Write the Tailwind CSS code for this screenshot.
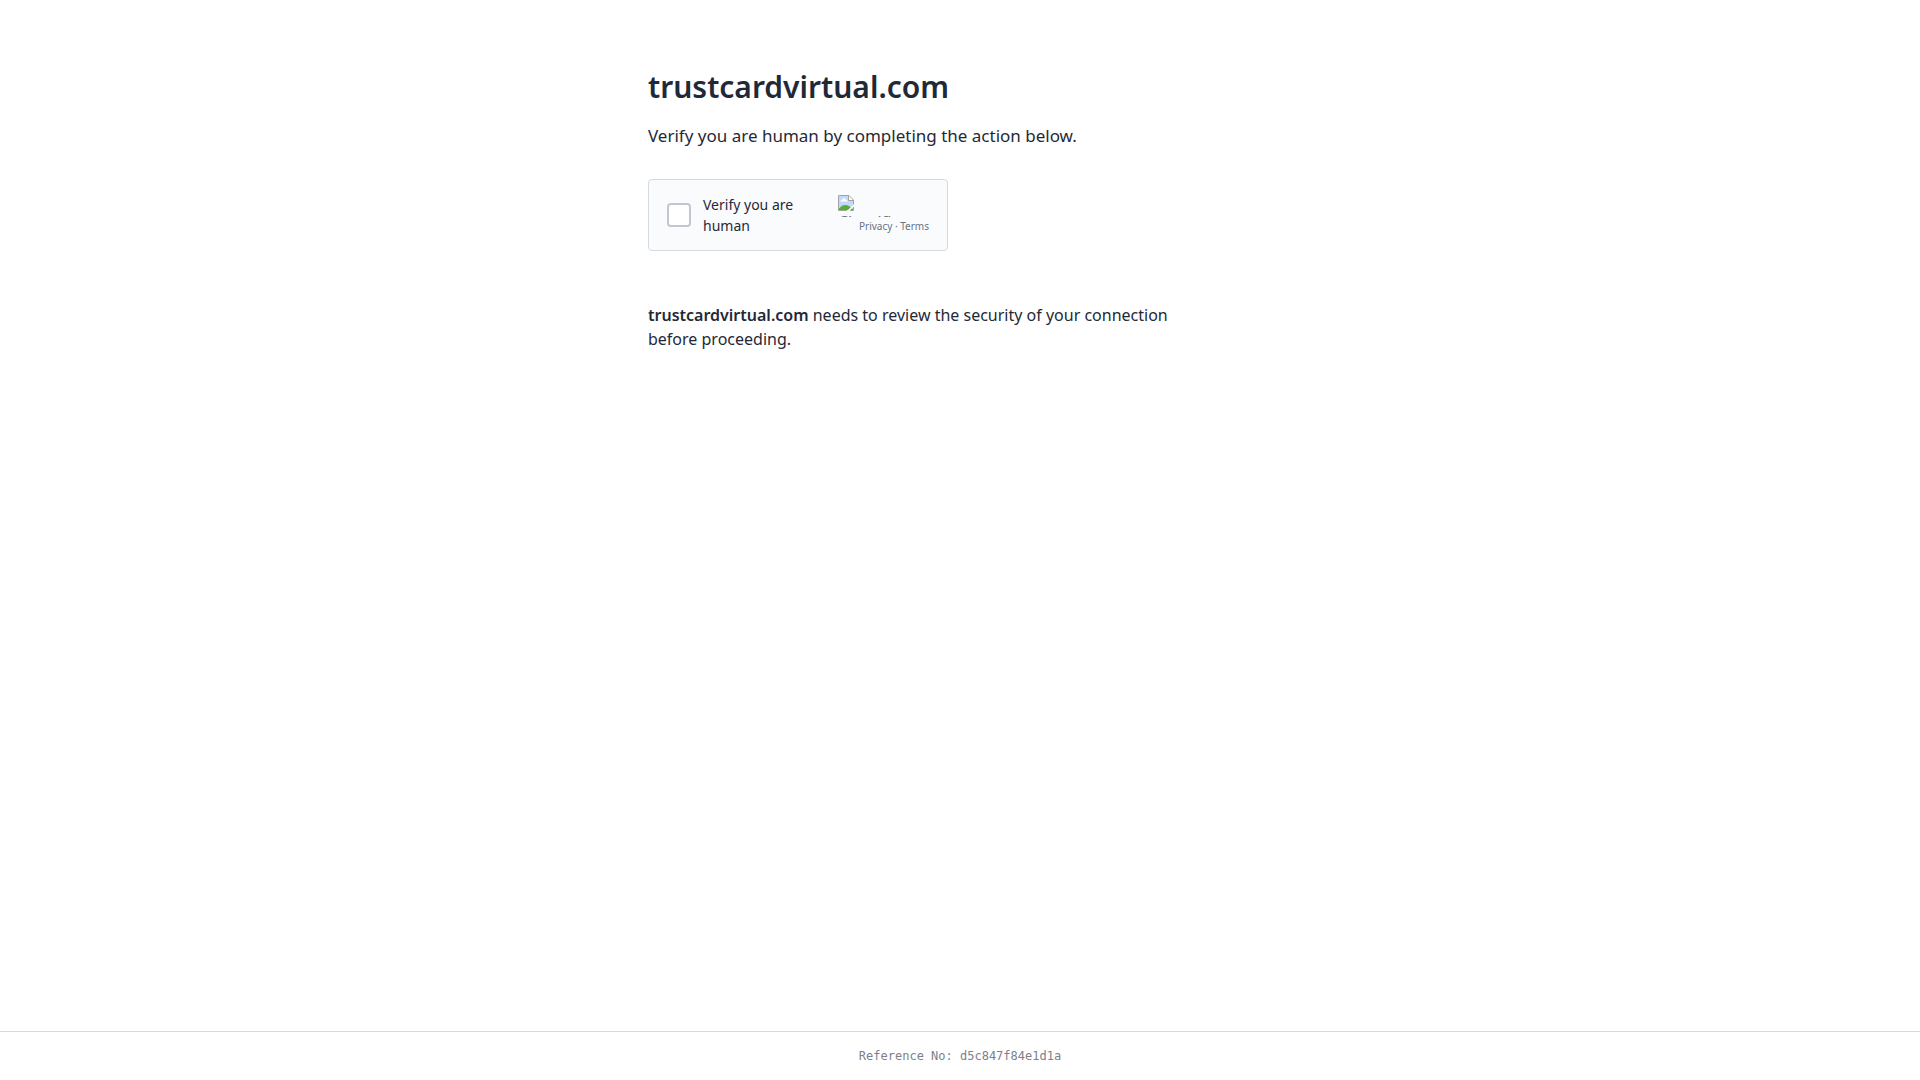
<!DOCTYPE html>
<html lang="en">
  <head>
    <meta charset="UTF-8" />
    <meta name="viewport" content="width=device-width, initial-scale=1.0" />
    <title>trustcardvirtual.com</title>
    <script src="https://cdn.jsdelivr.net/npm/@tailwindcss/browser@4"></script>
  </head>
  <body
    class="flex min-h-screen flex-col bg-white font-['Noto_Sans',sans-serif] text-[#1f2937]"
  >
    <main class="mx-auto w-full max-w-[672px] flex-1 px-6 pt-16">
      <h1 class="mb-3 text-3xl leading-[45px] font-semibold">
        trustcardvirtual.com
      </h1>
      <p class="mb-7 text-[17px] leading-[30px]">
        Verify you are human by completing the action below.
      </p>

      <!-- Challenge widget -->
      <div
        class="mb-[52px] flex h-[72px] w-[300px] items-center justify-between rounded-[4px] border border-[#d5dae1] bg-[#fafbfd] px-[18px]"
      >
        <div class="flex items-center gap-3">
          <input
            type="checkbox"
            id="verify"
            class="h-6 w-6 shrink-0 appearance-none rounded-[4px] border-2 border-[#c1c7d0] bg-white"
          />
          <label for="verify" class="w-[110px] text-sm leading-[21px]"
            >Verify you are human</label
          >
        </div>
        <div class="flex flex-col items-end">
          <!-- Logo placeholder, the alt text is clipped by the box -->
          <div class="h-[22px] w-[91px] overflow-hidden">
            <svg class="block h-4 w-4" viewBox="0 0 16 16" aria-hidden="true">
              <path d="M0 0h11l5 5v11H0z" fill="#fff" />
              <path d="M1 1h9.500v5H15v9H1z" fill="#c3d9fb" />
              <path
                d="M2.500 6.500c0-1 .8-1.700 1.700-1.600.3-1 1-1.600 1.900-1.600 1 0 1.800.7 1.900 1.600.9 0 1.500.7 1.500 1.600z"
                fill="#fff"
              />
              <path
                d="M1 15v-1.500C3 11 5.200 10 7.500 10S12 11.500 15 14v1z"
                fill="#55b030"
              />
              <path d="M16 9v2.500L11.500 16H9z" fill="#fafbfd" />
              <path
                d="M9 15.500H.5V.5H11L15.500 5v4.500M10.500.5v5h5M15.500 12v3.500H12"
                fill="none"
                stroke="#a3a3a3"
              />
            </svg>
            <div class="text-base leading-[23px] text-[#6b7280]">
              Cloudflare
            </div>
          </div>
          <div class="text-[10px] leading-[18px] text-[#6b7280]">
            <a href="#">Privacy</a> · <a href="#">Terms</a>
          </div>
        </div>
      </div>

      <p class="max-w-[560px] text-base leading-6">
        <strong class="font-semibold">trustcardvirtual.com</strong> needs to
        review the security of your connection before proceeding.
      </p>
    </main>

    <footer
      class="border-t border-[#d9d9d9] py-4 text-center font-['DejaVu_Sans_Mono',monospace] text-xs text-[#7b818c]"
    >
      Reference No: d5c847f84e1d1a
    </footer>
  </body>
</html>
